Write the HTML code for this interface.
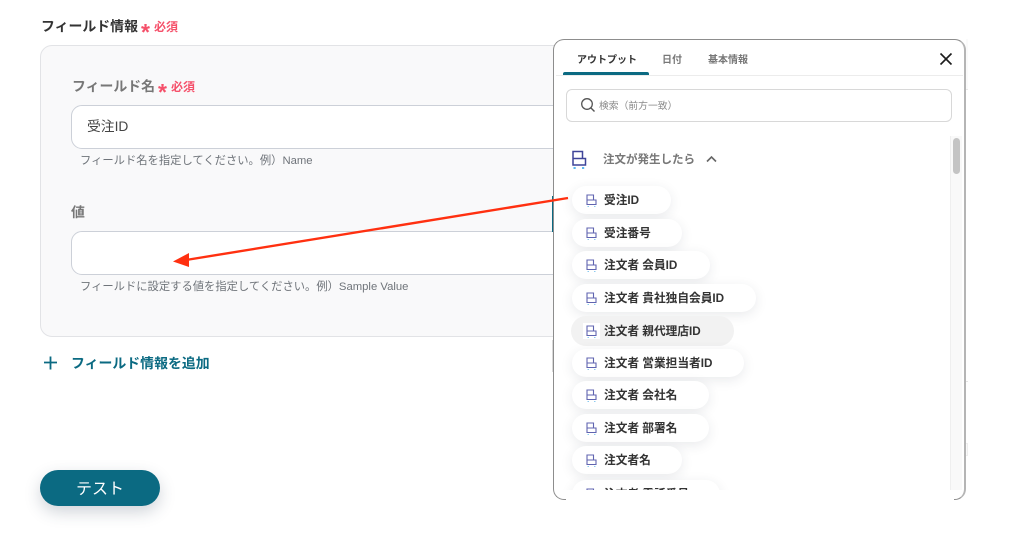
<!DOCTYPE html>
<html lang="ja"><head><meta charset="utf-8"><title>フィールド情報</title>
<style>
*{box-sizing:border-box}
html,body{margin:0;padding:0}
body{width:1020px;height:546px;position:relative;overflow:hidden;background:#fff;font-family:"Liberation Sans","Noto Sans CJK JP",sans-serif;color:#333}
.a{position:absolute;white-space:nowrap}
.req{color:#f5506a;font-weight:700;font-size:12px}
.ast{color:#f5506a;font-weight:700;font-size:23px;line-height:23px}
.lab{font-weight:700;font-size:13.9px;line-height:20px;color:#777}
.inp{position:absolute;left:71px;width:520px;height:44px;background:#fff;border:1px solid #ccd0d8;border-radius:11px}
.hint{font-size:11.3px;line-height:17px;color:#6f747a}
.chip{position:absolute;left:572px;height:28px;border-radius:14px;background:#fff;box-shadow:0 3px 12px rgba(40,50,70,.10);font-size:11.7px;font-weight:700;color:#333;line-height:30px;padding-left:32px;white-space:nowrap}
.chip svg{position:absolute;left:14px;top:8px}
.chip.h{left:571px;height:30px;line-height:31px;background:#f2f2f2;box-shadow:none;padding-left:33px;border-radius:15px}
.chip.h svg{left:15px;top:9px}
.chip.h i{position:absolute;left:12px;top:7px;width:17px;height:16px;background:#fff}
</style></head><body>

<div class="a" style="left:41px;top:16px;font-size:13.9px;line-height:20px;font-weight:700;color:#333">フィールド情報</div>
<div class="a ast" style="left:141px;top:21px">*</div>
<div class="a req" style="left:154px;top:18px;line-height:18px">必須</div>

<div class="a" style="left:40px;top:45px;width:540px;height:292px;background:#f9f9fa;border:1px solid #e2e3e6;border-radius:12px"></div>
<div class="a lab" style="left:72px;top:76px">フィールド名</div>
<div class="a ast" style="left:158px;top:81px">*</div>
<div class="a req" style="left:171px;top:78px;line-height:18px">必須</div>
<div class="inp" style="top:105px"></div>
<div class="a" style="left:87px;top:117px;font-size:13.8px;line-height:20px;color:#444">受注ID</div>
<div class="a hint" style="left:80px;top:153px">フィールド名を指定してください。例）Name</div>

<div class="a lab" style="left:71px;top:202px">値</div>
<div class="inp" style="top:231px"></div>
<div class="a hint" style="left:80px;top:279px">フィールドに設定する値を指定してください。例）Sample Value</div>

<svg class="a" style="left:44px;top:356px" width="14" height="14" viewBox="0 0 14 14"><path d="M6.5 0.5V13.5M0 6.5H13" stroke="#0b6a82" stroke-width="1.8" fill="none"/></svg>
<div class="a" style="left:71px;top:353px;font-size:13.9px;line-height:20px;font-weight:700;color:#0b6a82">フィールド情報を追加</div>

<div class="a" style="left:40px;top:470px;width:120px;height:36px;border-radius:18px;background:#0b6a82;color:#fff;font-size:16px;line-height:39px;text-align:center;box-shadow:0 6px 16px rgba(40,60,80,.22)">テスト</div>

<div class="a" style="left:552px;top:196px;width:1px;height:36px;background:#0b6a82"></div>
<div class="a" style="left:552px;top:340px;width:1px;height:32px;background:#d8d8d8"></div>
<div class="a" style="left:966px;top:39px;width:2px;height:51px;background:#fafafa;border-bottom:1px solid #e8e8e8"></div>
<div class="a" style="left:966px;top:381px;width:2px;height:1px;background:#e4e4e4"></div>
<div class="a" style="left:966px;top:443px;width:2px;height:13px;background:#fafafa;border:1px solid #eee;border-left:0"></div>

<div class="a" style="left:553px;top:39px;width:413px;height:461px;background:#fff;border:1px solid #8d8d8d;border-right:2px solid #b5b5b5;border-radius:11px;overflow:hidden">
  <div class="a" style="left:23px;top:13px;font-size:10px;line-height:16px;font-weight:700;color:#333">アウトプット</div>
  <div class="a" style="left:108px;top:13px;font-size:10px;line-height:16px;font-weight:700;color:#777">日付</div>
  <div class="a" style="left:154px;top:13px;font-size:10px;line-height:16px;font-weight:700;color:#777">基本情報</div>
  <div class="a" style="left:9px;top:32px;width:86px;height:3px;background:#0b6a82;border-radius:2px 2px 0 0"></div>
  <div class="a" style="left:2px;top:35px;width:407px;height:1px;background:#ececec"></div>
  <svg class="a" style="left:385px;top:12px" width="14" height="14" viewBox="0 0 14 14"><path d="M1.5 1.5L12.5 12.5M12.5 1.5L1.5 12.5" stroke="#1c1c1c" stroke-width="1.6" fill="none"/></svg>

  <div class="a" style="left:12px;top:49px;width:386px;height:33px;border:1px solid #d8d8d8;border-radius:6px;background:#fff"></div>
  <svg class="a" style="left:26px;top:57px" width="16" height="16" viewBox="0 0 16 16"><circle cx="7" cy="7" r="5.3" stroke="#555" stroke-width="1.3" fill="none"/><path d="M11 11L14.5 14.5" stroke="#555" stroke-width="1.4" fill="none"/></svg>
  <div class="a" style="left:45px;top:59px;font-size:9.8px;line-height:16px;color:#8a8a8a">検索（前方一致）</div>

  <svg class="a" style="left:17px;top:110px" width="16" height="20" viewBox="0 0 16 20"><path d="M2 8.5V1.5H11.5V8.5M2 8.5H14.5V15H2Z" stroke="#3f4499" stroke-width="1.5" fill="none"/><rect x="2.5" y="17" width="2.2" height="2" fill="#5cb8ee"/><rect x="11" y="17" width="2.2" height="2" fill="#5cb8ee"/></svg>
  <div class="a" style="left:49px;top:111px;font-size:11.5px;line-height:18px;font-weight:700;color:#777">注文が発生したら</div>
  <svg class="a" style="left:152px;top:115px" width="11" height="8" viewBox="0 0 11 8"><path d="M1 6.5L5.5 2L10 6.5" stroke="#666" stroke-width="1.6" fill="none"/></svg>

  <div class="a" style="left:396px;top:96px;width:12px;height:354px;background:#f9f9f9;border-left:1px solid #efefef"></div>
  <div class="a" style="left:399px;top:98px;width:7px;height:36px;background:#c4c4c4;border-radius:4px"></div>
</div>
<div class="a" style="left:566px;top:498px;width:388px;height:3px;background:#fff"></div>

<svg width="0" height="0" style="position:absolute"><defs><g id="ic"><path d="M1 6V1H7.5V6M1 6H10V10.5H1Z" stroke="#6064b0" stroke-width="1.1" fill="none"/><rect x="1.5" y="12" width="1.5" height="1" fill="#8ccbf0"/><rect x="8" y="12" width="1.5" height="1" fill="#8ccbf0"/></g></defs></svg>

<div class="chip" style="top:186px;width:99px"><svg width="11" height="14"><use href="#ic"/></svg>受注ID</div>
<div class="chip" style="top:219px;width:110px"><svg width="11" height="14"><use href="#ic"/></svg>受注番号</div>
<div class="chip" style="top:251px;width:138px"><svg width="11" height="14"><use href="#ic"/></svg>注文者 会員ID</div>
<div class="chip" style="top:284px;width:184px"><svg width="11" height="14"><use href="#ic"/></svg>注文者 貴社独自会員ID</div>
<div class="chip h" style="top:316px;width:163px"><i></i><svg width="11" height="14"><use href="#ic"/></svg>注文者 親代理店ID</div>
<div class="chip" style="top:349px;width:172px"><svg width="11" height="14"><use href="#ic"/></svg>注文者 営業担当者ID</div>
<div class="chip" style="top:381px;width:137px"><svg width="11" height="14"><use href="#ic"/></svg>注文者 会社名</div>
<div class="chip" style="top:414px;width:137px"><svg width="11" height="14"><use href="#ic"/></svg>注文者 部署名</div>
<div class="chip" style="top:446px;width:110px"><svg width="11" height="14"><use href="#ic"/></svg>注文者名</div>
<div class="a" style="left:556px;top:470px;width:392px;height:20px;overflow:hidden">
  <div class="chip" style="left:16px;top:10px;width:148px"><svg width="11" height="14"><use href="#ic"/></svg>注文者 電話番号</div>
</div>

<svg class="a" style="left:0;top:0;pointer-events:none" width="1020" height="546" viewBox="0 0 1020 546">
  <path d="M568 198L186 260" stroke="#ff3010" stroke-width="2.4" fill="none"/>
  <path d="M173 261.5L189 253L189 267Z" fill="#ff3010"/>
</svg>
</body></html>
